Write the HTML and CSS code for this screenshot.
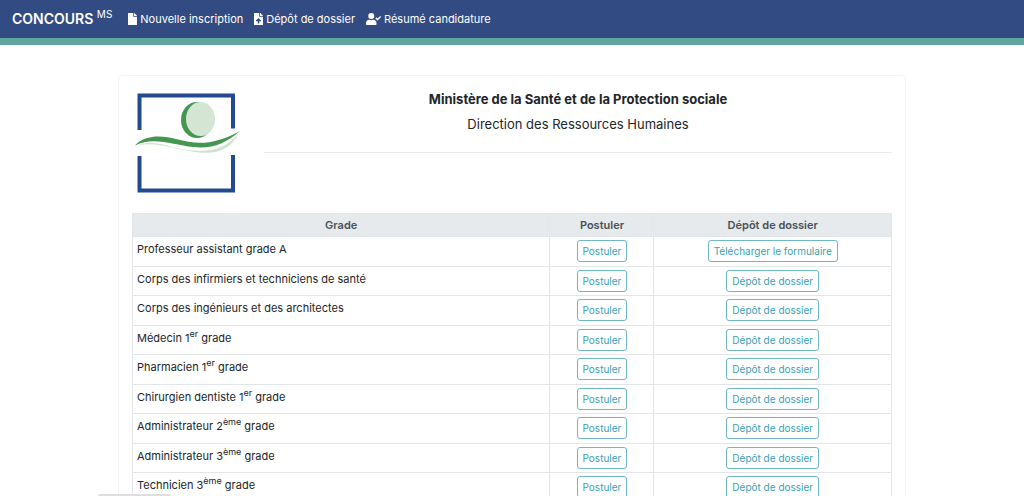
FILE: index.html
```html
<!DOCTYPE html>
<html lang="fr">
<head>
<meta charset="utf-8">
<meta name="viewport" content="width=device-width, initial-scale=1">
<title>Concours MS</title>
<link rel="stylesheet" href="styles.css">
</head>
<body>
<header class="navbar">
  <a class="brand" href="#">CONCOURS <sup>MS</sup></a>
  <nav class="nav">
    <a class="nav-link" href="#inscription"><svg class="icon-file" viewBox="0 0 384 512" aria-hidden="true"><path d="M224 136V0H24C11 0 0 11 0 24v464c0 13 11 24 24 24h336c13 0 24-11 24-24V160H248c-13 0-24-11-24-24zm160-14v6H256V0h6c6 0 12 3 17 7l98 98c4 5 7 11 7 17z"/></svg>Nouvelle inscription</a>
    <a class="nav-link" href="#depot"><svg class="icon-file" viewBox="0 0 384 512" aria-hidden="true"><path fill-rule="evenodd" d="M224 136V0H24C11 0 0 11 0 24v464c0 13 11 24 24 24h336c13 0 24-11 24-24V160H248c-13 0-24-11-24-24zm65 216h-65v80c0 9-7 16-16 16h-32c-9 0-16-7-16-16v-80H95c-14 0-21-17-11-27l96-96c7-6 17-6 24 0l96 96c10 10 3 27-11 27zm95-230v6H256V0h6c6 0 12 3 17 7l98 98c4 5 7 11 7 17z"/></svg>Dépôt de dossier</a>
    <a class="nav-link" href="#resume"><svg class="icon-user" viewBox="0 0 640 512" aria-hidden="true"><path d="M224 256a128 128 0 1 0 0-256 128 128 0 0 0 0 256zm90 32h-17a174 174 0 0 1-146 0h-17C60 288 0 348 0 422v42c0 27 21 48 48 48h352c27 0 48-21 48-48v-42c0-74-60-134-134-134zm323-125-28-28c-4-4-10-4-14 0L491 238l-45-45c-4-4-10-4-14 0l-28 28c-4 4-4 10 0 14l80 81c4 4 10 4 14 0l139-138c4-4 4-11 0-15z"/></svg>Résumé candidature</a>
  </nav>
</header>
<main class="card">
  <div class="intro">
    <svg class="logo" viewBox="0 0 106 100" role="img" aria-label="Logo du ministère">
      <path d="M4.500 37V2.500h93.500V35.500M4.500 63v34.500h93.500V62" fill="none" stroke="#234a91" stroke-width="4"/>
      <ellipse cx="62" cy="27" rx="16" ry="18" fill="#45964f"/>
      <ellipse cx="65.500" cy="26" rx="14.500" ry="17" fill="#d4e5d3"/>
      <path d="M2 52C22 46 36 55 52 57c24 3 40-2 52-17C92 63 72 61 54 58S24 49 2 52z" fill="#cfe2cd"/>
      <path d="M0 52.500C9 42 27 42 41 46c22 6 38 6 64-8C90 51 77 56 58 54 39 52 18 43 0 52.500z" fill="#45964f"/>
    </svg>
    <div class="heading">
      <h1>Ministère de la Santé et de la Protection sociale</h1>
      <p>Direction des Ressources Humaines</p>
    </div>
  </div>
  <table class="grades">
    <thead><tr><th class="col-grade" scope="col">Grade</th><th class="col-apply" scope="col">Postuler</th><th scope="col">Dépôt de dossier</th></tr></thead>
    <tbody>
      <tr><td>Professeur assistant grade A</td><td><a class="btn" href="#p1">Postuler</a></td><td><a class="btn" href="#d1">Télécharger le formulaire</a></td></tr>
      <tr><td>Corps des infirmiers et techniciens de santé</td><td><a class="btn" href="#p2">Postuler</a></td><td><a class="btn" href="#d2">Dépôt de dossier</a></td></tr>
      <tr><td>Corps des ingénieurs et des architectes</td><td><a class="btn" href="#p3">Postuler</a></td><td><a class="btn" href="#d3">Dépôt de dossier</a></td></tr>
      <tr><td>Médecin 1<sup>er</sup> grade</td><td><a class="btn" href="#p4">Postuler</a></td><td><a class="btn" href="#d4">Dépôt de dossier</a></td></tr>
      <tr><td>Pharmacien 1<sup>er</sup> grade</td><td><a class="btn" href="#p5">Postuler</a></td><td><a class="btn" href="#d5">Dépôt de dossier</a></td></tr>
      <tr><td>Chirurgien dentiste 1<sup>er</sup> grade</td><td><a class="btn" href="#p6">Postuler</a></td><td><a class="btn" href="#d6">Dépôt de dossier</a></td></tr>
      <tr><td>Administrateur 2<sup>ème</sup> grade</td><td><a class="btn" href="#p7">Postuler</a></td><td><a class="btn" href="#d7">Dépôt de dossier</a></td></tr>
      <tr><td>Administrateur 3<sup>ème</sup> grade</td><td><a class="btn" href="#p8">Postuler</a></td><td><a class="btn" href="#d8">Dépôt de dossier</a></td></tr>
      <tr><td>Technicien 3<sup>ème</sup> grade</td><td><a class="btn" href="#p9">Postuler</a></td><td><a class="btn" href="#d9">Dépôt de dossier</a></td></tr>
    </tbody>
  </table>
</main>
<div class="status"></div>
</body>
</html>
```
FILE: styles.css
```css
* { box-sizing: border-box; }
body {
  margin: 0;
  background: #fff;
  color: #212529;
  font: 11px/16px Inter, "Liberation Sans", sans-serif;
}
a { text-decoration: none; }
sup { font-size: 9px; line-height: 0; }
.navbar {
  display: flex;
  align-items: center;
  gap: 16px;
  padding: 8px 12px;
  background: #324b83;
  border-bottom: 7px solid #5fa79e;
  color: #fff;
}
.brand { color: #fff; font-size: 14px; font-weight: 600; line-height: 22px; }
.brand sup { font-size: 10px; font-weight: 400; }
.nav { display: flex; gap: 11px; }
.nav-link { display: flex; align-items: center; gap: 3px; color: #fff; font-size: 11px; line-height: 22px; }
.nav-link svg { height: 12px; fill: currentColor; }
.icon-file { width: 9px; }
.icon-user { width: 15px; }
.card {
  max-width: 788px;
  margin: 30px auto;
  padding: 13px;
  border: 1px solid #f3f4f5;
  border-radius: 3px;
}
.intro { display: flex; align-items: flex-start; gap: 23px; padding: 0 0 20px 3px; }
.logo { width: 106px; height: 100px; flex: none; margin-top: 4px; }
.heading { flex: 1; padding-bottom: 18px; border-bottom: 1px solid #e9ebed; text-align: center; font-size: 13px; line-height: 20px; }
.heading h1 { margin: 0 0 5px; font-size: 13px; font-weight: 700; line-height: 20px; }
.heading p { margin: 0; }
.grades { width: 100%; table-layout: fixed; border-collapse: collapse; }
.grades th, .grades td { border: 1px solid #e3e6e9; padding: 3px; text-align: center; vertical-align: top; }
.grades th { background: #e6eaed; color: #495057; font-weight: 600; }
.grades td:first-child { padding: 4px 4px 0; text-align: left; }
.grades tr:nth-child(odd) td { padding-bottom: 4px; }
.col-grade { width: 55%; }
.col-apply { width: 104px; }
.btn {
  display: inline-block;
  padding: 4px 5px;
  border: 1px solid #6fb7c5;
  border-radius: 3px;
  color: #3a9fb2;
  font-size: 10px;
  line-height: 12px;
  vertical-align: top;
}
.status { position: fixed; left: 98px; bottom: 0; width: 73px; height: 2px; background: #dedede; border-radius: 2px 2px 0 0; }
```
